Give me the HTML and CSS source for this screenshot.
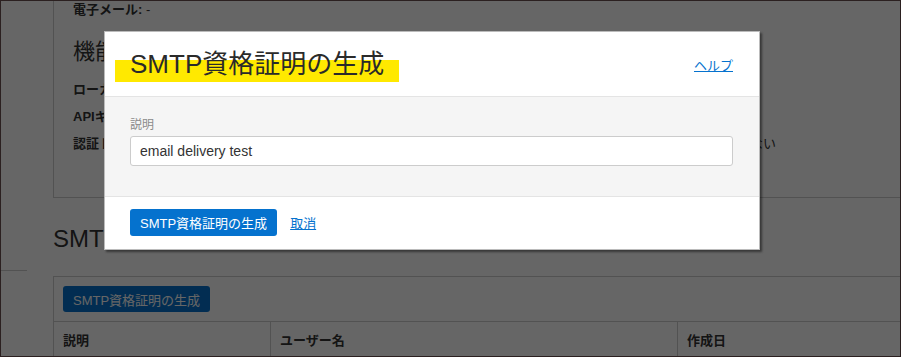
FILE: index.html
```html
<!DOCTYPE html>
<html lang="ja">
<head>
    <meta charset="UTF-8">
    <title>SMTP資格証明の生成</title>
    <link rel="stylesheet" href="styles.css">
</head>
<body>
    <div class="screen">
        <div class="page">
            <aside class="sidebar">
                <div class="nav-item"></div>
            </aside>
            <main class="main">
                <section class="info-box">
                    <p class="info-line"><b>電子メール:</b> -</p>
                    <h3>機能</h3>
                    <div class="caps">
                        <p><b>ローカル・パスワード:</b> はい</p>
                        <p></p>
                        <p><b>APIキー:</b> はい</p>
                        <p></p>
                        <p><b>認証トークン:</b> はい</p>
                        <p><b>顧客秘密キー:</b> ない</p>
                    </div>
                </section>
                <h2>SMTP資格証明</h2>
                <div class="table-box">
                    <div class="toolbar">
                        <button class="btn">SMTP資格証明の生成</button>
                    </div>
                    <div class="table-head">
                        <div class="cell">説明</div>
                        <div class="cell">ユーザー名</div>
                        <div class="cell">作成日</div>
                    </div>
                </div>
            </main>
        </div>

        <div class="overlay"></div>

        <div class="modal">
            <div class="modal-header">
                <h1 class="modal-title">SMTP資格証明の生成</h1>
                <a href="#" class="link">ヘルプ</a>
            </div>
            <div class="modal-body">
                <label class="field-label" for="desc">説明</label>
                <input class="field" id="desc" type="text" value="email delivery test">
            </div>
            <div class="modal-footer">
                <button class="btn">SMTP資格証明の生成</button>
                <a href="#" class="link cancel">取消</a>
            </div>
        </div>
    </div>
</body>
</html>
```

FILE: styles.css
```css
body {
    margin: 0;
    padding: 0;
    font-family: 'Liberation Sans', 'Noto Sans CJK JP', sans-serif;
    color: #333;
    background-color: #fff;
}

.screen {
    position: relative;
    width: 901px;
    height: 357px;
    box-sizing: border-box;
    border: 1px solid #2b2020;
    overflow: hidden;
    background-color: #fff;
}

/* page behind the dialog */
.page {
    display: flex;
    height: 100%;
}

.sidebar {
    width: 52px;
    flex-shrink: 0;
}

.nav-item {
    width: 26px;
    height: 269px;
    border-bottom: 1px solid #ccc;
}

.main {
    flex-grow: 1;
}

.info-box {
    height: 196px;
    border-left: 1px solid #ccc;
    border-bottom: 1px solid #ccc;
    padding-left: 19px;
}

.info-box p {
    margin: 0;
    font-size: 13px;
    line-height: 17px;
}

.info-box h3 {
    margin: 20px 0 0;
    font-size: 22px;
    font-weight: normal;
    line-height: 28px;
}

.caps {
    display: grid;
    grid-template-columns: 591px 1fr;
    row-gap: 10px;
    margin-top: 15px;
}

.main h2 {
    margin: 26px 0 22px;
    font-size: 24px;
    font-weight: normal;
    line-height: 30px;
}

.table-box {
    border: 1px solid #ccc;
    border-right: none;
}

.toolbar {
    padding: 9px;
    border-bottom: 1px solid #ccc;
}

.toolbar .btn {
    height: 26px;
}

.table-head {
    display: grid;
    grid-template-columns: 216px 407px 1fr;
}

.table-head .cell {
    padding: 10px 9px;
    font-size: 13px;
    font-weight: bold;
    line-height: 17px;
}

.table-head .cell + .cell {
    border-left: 1px solid #ccc;
}

.btn {
    background-color: #0572ce;
    border: none;
    border-radius: 3px;
    color: #fff;
    font-family: inherit;
    font-size: 13px;
    height: 27px;
    padding: 0 10px;
    cursor: pointer;
}

/* dialog */
.overlay {
    position: absolute;
    inset: 0;
    background-color: rgba(0, 0, 0, 0.6);
}

.modal {
    position: absolute;
    top: 30px;
    left: 103px;
    width: 656px;
    box-sizing: border-box;
    background-color: #fff;
    border: 1px solid #bbb;
    box-shadow: 2px 2px 2px rgba(0, 0, 0, 0.45);
}

.modal-header {
    position: relative;
    display: flex;
    justify-content: space-between;
    align-items: center;
    height: 64px;
    padding: 0 26px 0 25px;
    border-bottom: 1px solid #e4e4e4;
}

.modal-header::before {
    content: '';
    position: absolute;
    left: 10px;
    top: 28px;
    width: 284px;
    height: 22px;
    background-color: #ffe900;
}

.modal-title {
    position: relative;
    margin: 0;
    font-size: 26px;
    font-weight: normal;
    line-height: 30px;
    color: #2a2a2a;
}

.link {
    color: #0572ce;
    font-size: 13px;
    text-decoration: underline;
}

.modal-body {
    background-color: #f5f5f5;
    padding: 21px 26px 30px 25px;
    border-bottom: 1px solid #e4e4e4;
}

.field-label {
    display: block;
    margin-bottom: 3px;
    font-size: 12px;
    line-height: 15px;
    color: #8a8a8a;
}

.field {
    display: block;
    width: 100%;
    height: 30px;
    box-sizing: border-box;
    border: 1px solid #ccc;
    border-radius: 3px;
    padding: 0 9px;
    font-family: inherit;
    font-size: 14px;
    color: #333;
    background-color: #fff;
}

.modal-footer {
    display: flex;
    align-items: center;
    padding: 12px 25px 13px;
}

.cancel {
    margin-left: 13px;
}
```
